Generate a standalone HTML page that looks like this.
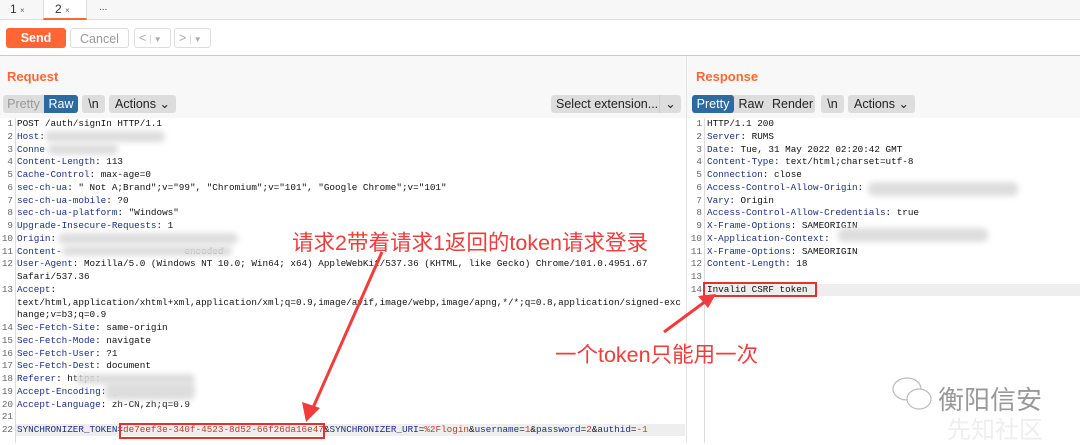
<!DOCTYPE html>
<html><head><meta charset="utf-8"><style>
*{margin:0;padding:0;box-sizing:border-box}
body{width:1080px;height:443px;overflow:hidden;background:#fff;font-family:"Liberation Sans","Noto Sans CJK SC",sans-serif;position:relative}
.a{position:absolute}
.code{font-family:"Liberation Mono","Noto Sans CJK SC",monospace;font-size:9.3px;line-height:12.75px;white-space:pre;color:#111}
.k{color:#1c2f86}
.r{color:#c0392b}
.ln{color:#666;text-align:right}
.btn{position:absolute;height:18px;border-radius:3px;font-size:12.5px;line-height:18px;text-align:center}
.blur{position:absolute;background:#ddd;filter:blur(3px);border-radius:6px}
</style></head><body>
<div class="a" style="left:0;top:0;width:1080px;height:20px;background:#f7f7f7;border-bottom:1px solid #ddd"></div>
<div class="a" style="left:0;top:0;width:43px;height:20px;font-size:12px;line-height:18px;padding-left:10px;color:#333">1 <span style="font-size:8px;color:#666">×</span></div>
<div class="a" style="left:43px;top:0;width:44px;height:20px;background:#fff;border-left:1px solid #ddd;border-right:1px solid #ddd;border-bottom:2px solid #ff6633;font-size:12px;line-height:18px;padding-left:11px;color:#333">2 <span style="font-size:8px;color:#666">×</span></div>
<div class="a" style="left:99px;top:2px;font-size:10px;color:#444">...</div>
<div class="btn" style="left:6px;top:28px;width:60px;height:20px;line-height:20px;background:#ff6633;color:#fff;font-weight:bold">Send</div>
<div class="btn" style="left:70px;top:28px;width:59px;height:20px;line-height:20px;border:1px solid #ddd;color:#999;background:#fff">Cancel</div>
<div class="btn" style="left:134px;top:28px;width:37px;height:20px;line-height:18px;border:1px solid #ddd;color:#aaa;background:#fff;text-align:left;padding-left:4px">&lt; <span style="font-size:8px;border-left:1px solid #ddd;padding-left:3px">▼</span></div>
<div class="btn" style="left:174px;top:28px;width:37px;height:20px;line-height:18px;border:1px solid #ddd;color:#aaa;background:#fff;text-align:left;padding-left:4px">&gt; <span style="font-size:8px;border-left:1px solid #ddd;padding-left:3px">▼</span></div>
<div class="a" style="left:0;top:55px;width:1080px;height:1px;background:#ccc"></div>
<div class="a" style="left:0;top:56px;width:1080px;height:62px;background:#f8f8f8"></div>
<div class="a" style="left:686px;top:56px;width:1px;height:387px;background:#e4e4e4"></div>
<div class="a" style="left:7px;top:69px;font-size:13px;font-weight:bold;color:#ff6633">Request</div>
<div class="btn" style="left:3px;top:95px;width:75px;background:#ddd"></div>
<div class="btn" style="left:3px;top:95px;width:41px;color:#999">Pretty</div>
<div class="btn" style="left:44px;top:95px;width:34px;background:#2c6aa0;color:#fff;border-radius:0 3px 3px 0">Raw</div>
<div class="btn" style="left:82px;top:95px;width:23px;background:#ddd;color:#222">\n</div>
<div class="btn" style="left:109px;top:95px;width:67px;background:#ddd;color:#222">Actions ⌄</div>
<div class="btn" style="left:551px;top:95px;width:130px;background:#ddd;color:#222;text-align:left;padding-left:5px">Select extension... <span style="position:absolute;right:0;width:22px;border-left:1px solid #ccc;text-align:center">⌄</span></div>
<div class="a" style="left:696px;top:69px;font-size:13px;font-weight:bold;color:#ff6633">Response</div>
<div class="btn" style="left:692px;top:95px;width:123px;background:#ddd"></div>
<div class="btn" style="left:692px;top:95px;width:42px;background:#2c6aa0;color:#fff">Pretty</div>
<div class="btn" style="left:735px;top:95px;width:32px;color:#222">Raw</div>
<div class="btn" style="left:770px;top:95px;width:45px;color:#222">Render</div>
<div class="btn" style="left:821px;top:95px;width:23px;background:#ddd;color:#222">\n</div>
<div class="btn" style="left:848px;top:95px;width:67px;background:#ddd;color:#222">Actions ⌄</div>
<div class="a" style="left:15px;top:118px;width:1px;height:325px;background:#ddd"></div>
<div class="a" style="left:16px;top:424px;width:669px;height:12px;background:#eee"></div>
<div class="a code ln" style="left:0;top:118px;width:13px">1
2
3
4
5
6
7
8
9
10
11
12

13


14
15
16
17
18
19
20
21
22</div>
<div class="a code" style="left:17px;top:118px">POST /auth/signIn HTTP/1.1
<span class="k">Host</span>:
<span class="k">Conne</span>
<span class="k">Content-Length</span>: 113
<span class="k">Cache-Control</span>: max-age=0
<span class="k">sec-ch-ua</span>: " Not A;Brand";v="99", "Chromium";v="101", "Google Chrome";v="101"
<span class="k">sec-ch-ua-mobile</span>: ?0
<span class="k">sec-ch-ua-platform</span>: "Windows"
<span class="k">Upgrade-Insecure-Requests</span>: 1
<span class="k">Origin</span>:
<span class="k">Content-</span>                      encoded
<span class="k">User-Agent</span>: Mozilla/5.0 (Windows NT 10.0; Win64; x64) AppleWebKit/537.36 (KHTML, like Gecko) Chrome/101.0.4951.67
Safari/537.36
<span class="k">Accept</span>:
text/html,application/xhtml+xml,application/xml;q=0.9,image/avif,image/webp,image/apng,*/*;q=0.8,application/signed-exc
hange;v=b3;q=0.9
<span class="k">Sec-Fetch-Site</span>: same-origin
<span class="k">Sec-Fetch-Mode</span>: navigate
<span class="k">Sec-Fetch-User</span>: ?1
<span class="k">Sec-Fetch-Dest</span>: document
<span class="k">Referer</span>: https:
<span class="k">Accept-Encoding</span>: gzip, deflate
<span class="k">Accept-Language</span>: zh-CN,zh;q=0.9

<span class="k">SYNCHRONIZER_TOKEN</span>=<span class="r">de7eef3e-340f-4523-8d52-66f26da16e47</span>&amp;<span class="k">SYNCHRONIZER_URI</span>=<span class="r">%2Flogin</span>&amp;<span class="k">username</span>=<span class="r">1</span>&amp;<span class="k">password</span>=<span class="r">2</span>&amp;<span class="k">authid</span>=<span class="r">-1</span></div>
<div class="blur" style="left:45px;top:131px;width:120px;height:11px"></div>
<div class="blur" style="left:48px;top:144px;width:70px;height:11px"></div>
<div class="blur" style="left:58px;top:233px;width:180px;height:11px"></div>
<div class="blur" style="left:62px;top:246px;width:170px;height:10px"></div>
<div class="blur" style="left:75px;top:374px;width:120px;height:10px"></div>
<div class="blur" style="left:105px;top:382px;width:90px;height:18px"></div>
<div class="a" style="left:119px;top:423px;width:206px;height:16px;border:2px solid #e8302f"></div>
<div class="a" style="left:704px;top:118px;width:1px;height:325px;background:#ddd"></div>
<div class="a" style="left:705px;top:284px;width:375px;height:12px;background:#eee"></div>
<div class="a code ln" style="left:688px;top:118px;width:14px">1
2
3
4
5
6
7
8
9
10
11
12
13
14</div>
<div class="a code" style="left:707px;top:118px">HTTP/1.1 200
<span class="k">Server</span>: RUMS
<span class="k">Date</span>: Tue, 31 May 2022 02:20:42 GMT
<span class="k">Content-Type</span>: text/html;charset=utf-8
<span class="k">Connection</span>: close
<span class="k">Access-Control-Allow-Origin</span>:
<span class="k">Vary</span>: Origin
<span class="k">Access-Control-Allow-Credentials</span>: true
<span class="k">X-Frame-Options</span>: SAMEORIGIN
<span class="k">X-Application-Context</span>:
<span class="k">X-Frame-Options</span>: SAMEORIGIN
<span class="k">Content-Length</span>: 18

Invalid CSRF token</div>
<div class="blur" style="left:868px;top:182px;width:150px;height:14px"></div>
<div class="blur" style="left:838px;top:228px;width:150px;height:14px"></div>
<div class="a" style="left:703px;top:282px;width:114px;height:15px;border:2px solid #e8302f"></div>
<div class="a" style="left:292px;top:226px;font-size:21.5px;color:#f03c3c;white-space:nowrap">请求2带着请求1返回的token请求登录</div>
<div class="a" style="left:555px;top:338px;font-size:21.5px;color:#f03c3c;white-space:nowrap">一个token只能用一次</div>
<svg class="a" style="left:0;top:0" width="1080" height="443">
<line x1="382" y1="252" x2="312" y2="410" stroke="#f03c3c" stroke-width="3"/>
<polygon points="306,422 302,402 320,408" fill="#f03c3c"/>
<line x1="664" y1="332" x2="706" y2="301" stroke="#f03c3c" stroke-width="3"/>
<polygon points="716,294 698,296 708,308" fill="#f03c3c"/>
</svg>
<svg class="a" style="left:890px;top:375px" width="48" height="40"><g fill="none" stroke="#bbb" stroke-width="1.2"><ellipse cx="17" cy="14" rx="14" ry="11"/><ellipse cx="29" cy="24" rx="12" ry="10" fill="#fff"/></g></svg>
<div class="a" style="left:938px;top:380px;font-size:26px;color:#999;white-space:nowrap">衡阳信安</div>
<div class="a" style="left:947px;top:410px;font-size:24px;color:#eee;white-space:nowrap">先知社区</div>
</body></html>
